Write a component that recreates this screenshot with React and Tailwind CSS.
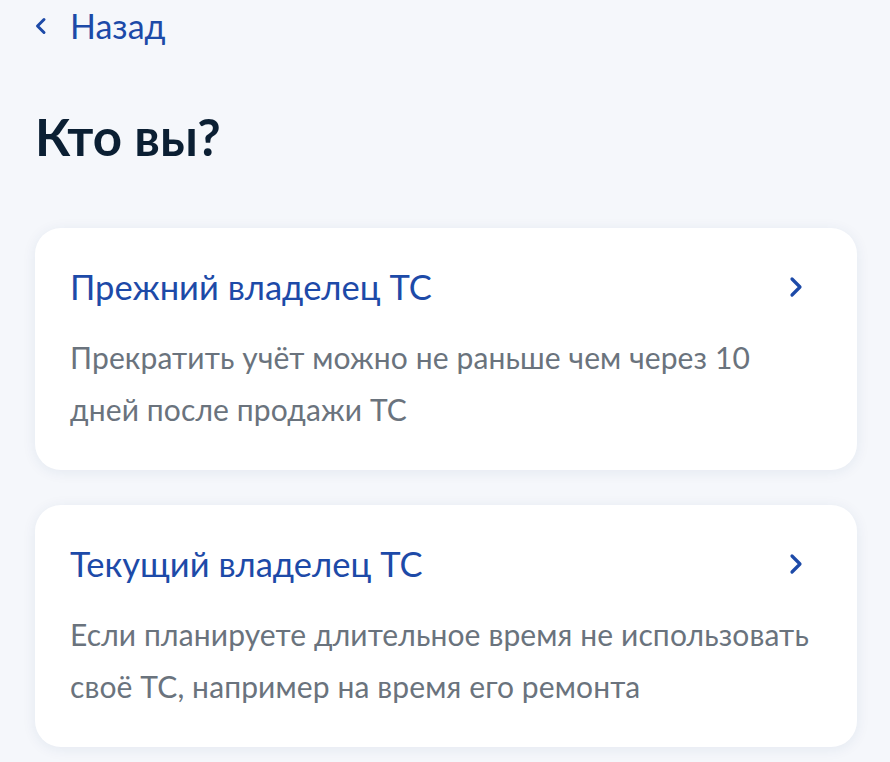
export default function App() {
  const Chevron = () => (
    <svg width="16" height="22" viewBox="0 0 16 22" fill="none">
      <path d="M4 3l8 8-8 8" stroke="#1d4aa8" strokeWidth="3.2" strokeLinecap="round" strokeLinejoin="round" />
    </svg>
  );
  const Card = ({ title, desc }) => (
    <div className="bg-white rounded-[26px] shadow-[0_2px_14px_rgba(30,60,120,0.08)] px-[35px] pt-[37px] pb-[35px]">
      <div className="flex items-center justify-between">
        <div className="text-[34.5px] leading-[44px] text-[#1d4aa8]">{title}</div>
        <div className="mr-[18px]"><Chevron /></div>
      </div>
      <div className="mt-[22px] text-[30px] tracking-[0.12px] leading-[52px] text-[#6a737d]">{desc}</div>
    </div>
  );
  return (
    <div className="min-h-[762px] w-[890px] bg-[#f5f7fb] px-[35px] pt-[4px] overflow-hidden" style={{ fontFamily: 'Lato, "Noto Sans", sans-serif' }}>
      <div className="flex items-center h-[44px] gap-[22px]">
        <svg width="14" height="20" viewBox="0 0 14 20" fill="none" className="ml-[-1px]">
          <path d="M10 3.5L3.5 10l6.5 6.5" stroke="#1d4aa8" strokeWidth="3" strokeLinecap="round" strokeLinejoin="round" />
        </svg>
        <span className="text-[34px] text-[#1d4aa8] leading-[44px]">Назад</span>
      </div>
      <h1 className="mt-[59px] text-[51px] font-bold leading-[60px] text-[#0b1f33]">Кто вы?</h1>
      <div className="mt-[61px] flex flex-col gap-[35px] w-[822px]">
        <Card title="Прежний владелец ТС" desc={<>Прекратить учёт можно не раньше чем через 10<br />дней после продажи ТС</>} />
        <Card title="Текущий владелец ТС" desc={<>Если планируете длительное время не использовать<br />своё ТС, например на время его ремонта</>} />
      </div>
    </div>
  );
}
